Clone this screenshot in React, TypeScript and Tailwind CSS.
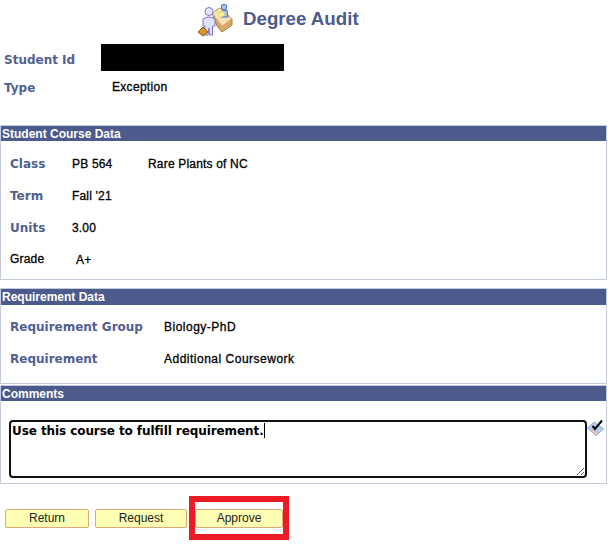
import React from 'react';

const labelClass = "font-['DejaVu_Sans'] text-[12px] font-bold leading-[14px] text-[#51608f]";
const valueClass = "text-[12px] leading-[14px] tracking-[0.18px] text-black [-webkit-text-stroke:0.3px_black]";
const wideValueClass = "text-[12px] leading-[14px] tracking-[0.5px] text-black [-webkit-text-stroke:0.3px_black]";

function AuditIcon() {
  return (
    <svg width="38" height="38" viewBox="0 0 38 38">
      {/* desk */}
      <path d="M15 13 L23 8 L35 19 L35 25 L25 32 L20 26 Z" fill="#dca868" stroke="#a8783c" />
      <path d="M15 13 L23 8 L35 19 L25 26 Z" fill="#f6e0b8" stroke="#c89a5c" strokeWidth="0.6" />
      {/* clerk behind the desk */}
      <circle cx="27" cy="7" r="2.8" fill="#a8c4f2" stroke="#4f6cc4" />
      <path d="M24 17 L25 11 L30 10 L31 17 Z" fill="#a8c4f2" stroke="#4f6cc4" />
      <path d="M21 13 L26 11 L28 15 L23 18 Z" fill="#fbf08a" stroke="#d8c85a" strokeWidth="0.5" />
      {/* visitor */}
      <circle cx="12" cy="11.5" r="4" fill="#e6e6fa" stroke="#7a78cc" />
      <path d="M6 19 Q12 15 18 19 L18 26 L15.5 26 L15.5 35 L12.5 35 L12 28 L11 35 L8 35 L8 26 L6 26 Z" fill="#e0e0f8" stroke="#7a78cc" />
      {/* briefcase */}
      <path d="M1 32 L6 27 L11 32 L6 36 Z" fill="#d9962a" stroke="#8a5a14" />
    </svg>
  );
}

function CheckIcon() {
  return (
    <svg width="17" height="17" viewBox="0 0 17 17">
      <path d="M0.5 9 L7 3 L16.5 10 L9 16.5 Z" fill="#b4d0f0" stroke="#8ca8cc" />
      <path d="M4 12 L9 16.5 L11 14.5 L6 10.5 Z" fill="#f4c8c8" stroke="#b8a0a8" strokeWidth="0.5" />
      <path d="M5.5 7 L8 10 L15 1.5" fill="none" stroke="black" strokeWidth="2" />
    </svg>
  );
}

function SectionPanel({ title, children, headClass, bodyClass }: { title: string; children: React.ReactNode; headClass: string; bodyClass: string }) {
  return (
    <section className="w-[607px] border-r border-b border-l border-[#c3cbdc]">
      <h2 className={`border-t border-[#c3cbdc] bg-[#4d5b8c] pl-px font-['Liberation_Sans'] text-[12px] font-bold text-white ${headClass}`}>
        {title}
      </h2>
      <div className={bodyClass}>{children}</div>
    </section>
  );
}

function ActionButton({ label, widthClass }: { label: string; widthClass: string }) {
  return (
    <button className={`h-[19px] rounded-[2px] border border-[#dfa878] bg-[#ffffb4] text-center text-[12px] leading-[17px] text-[#222] ${widthClass}`}>
      {label}
    </button>
  );
}

export default function App() {
  return (
    <div className="h-[547px] w-[614px] overflow-hidden bg-white font-['Liberation_Sans',sans-serif]">
      <header className="flex h-[44px] items-start pl-[197px]">
        <AuditIcon />
        <h1 className="ml-[8px] mt-[7px] text-[18.7px] font-bold leading-[24px] text-[#4d5b8c]">Degree Audit</h1>
      </header>

      <div className="flex h-[28px] items-start pl-[4px]">
        <span className={`${labelClass} mt-[9px] w-[97px]`}>Student Id</span>
        <div className="h-[27px] w-[183px] bg-black" />
      </div>
      <div className="mt-[8px] flex h-[45px] items-start pl-[4px]">
        <span className={`${labelClass} mt-px w-[108px]`}>Type</span>
        <span className="text-[12px] leading-[14px] tracking-[0.3px] text-black [-webkit-text-stroke:0.3px_black]">Exception</span>
      </div>

      <SectionPanel title="Student Course Data" headClass="h-[16px] leading-[17px]" bodyClass="flex h-[138px] flex-col pl-[9px] pt-[16px]">
        <div className="flex h-[32px]">
          <span className={`${labelClass} w-[62px]`}>Class</span>
          <span className={`${valueClass} w-[76px]`}>PB 564</span>
          <span className={valueClass}>Rare Plants of NC</span>
        </div>
        <div className="flex h-[32px]">
          <span className={`${labelClass} w-[62px]`}>Term</span>
          <span className={valueClass}>Fall '21</span>
        </div>
        <div className="flex h-[31px]">
          <span className={`${labelClass} w-[62px]`}>Units</span>
          <span className={valueClass}>3.00</span>
        </div>
        <div className="flex">
          <span className={`${valueClass} w-[66px]`}>Grade</span>
          <span className={`${valueClass} mt-px`}>A+</span>
        </div>
      </SectionPanel>

      <div className="mt-[8px]">
        <SectionPanel title="Requirement Data" headClass="h-[17px] leading-[17px]" bodyClass="flex h-[78px] flex-col pl-[9px] pt-[15px]">
          <div className="flex h-[32px]">
            <span className={`${labelClass} w-[154px]`}>Requirement Group</span>
            <span className={wideValueClass}>Biology-PhD</span>
          </div>
          <div className="flex">
            <span className={`${labelClass} w-[154px]`}>Requirement</span>
            <span className={wideValueClass}>Additional Coursework</span>
          </div>
        </SectionPanel>
      </div>

      <div className="mt-px">
        <SectionPanel title="Comments" headClass="h-[16px] leading-[17px]" bodyClass="flex h-[82px] items-start pl-[8px] pt-[19px]">
          <div className="relative">
            <textarea
              readOnly
              value="Use this course to fulfill requirement."
              className="block h-[58px] w-[578px] resize rounded-[4px] border-2 border-[#111] px-[1px] pb-0 pt-[2px] font-['DejaVu_Sans'] text-[12px] font-bold leading-[15px] tracking-[-0.08px] text-black outline-none"
            />
            {/* text caret */}
            <span className="absolute left-[255px] top-[3px] h-[15px] w-px bg-black" />
          </div>
          <span className="-mt-px block"><CheckIcon /></span>
        </SectionPanel>
      </div>

      <div className="mt-[25px] flex items-start pl-[5px]">
        <ActionButton label="Return" widthClass="w-[84px]" />
        <div className="ml-[6px] flex">
          <ActionButton label="Request" widthClass="w-[92px]" />
        </div>
        <div className="relative ml-[8px] flex">
          <ActionButton label="Approve" widthClass="w-[88px]" />
          <div className="absolute left-[-6px] top-[-13px] h-[44px] w-[100px] border-[6px] border-[#ed1c24]" />
        </div>
      </div>
    </div>
  );
}
